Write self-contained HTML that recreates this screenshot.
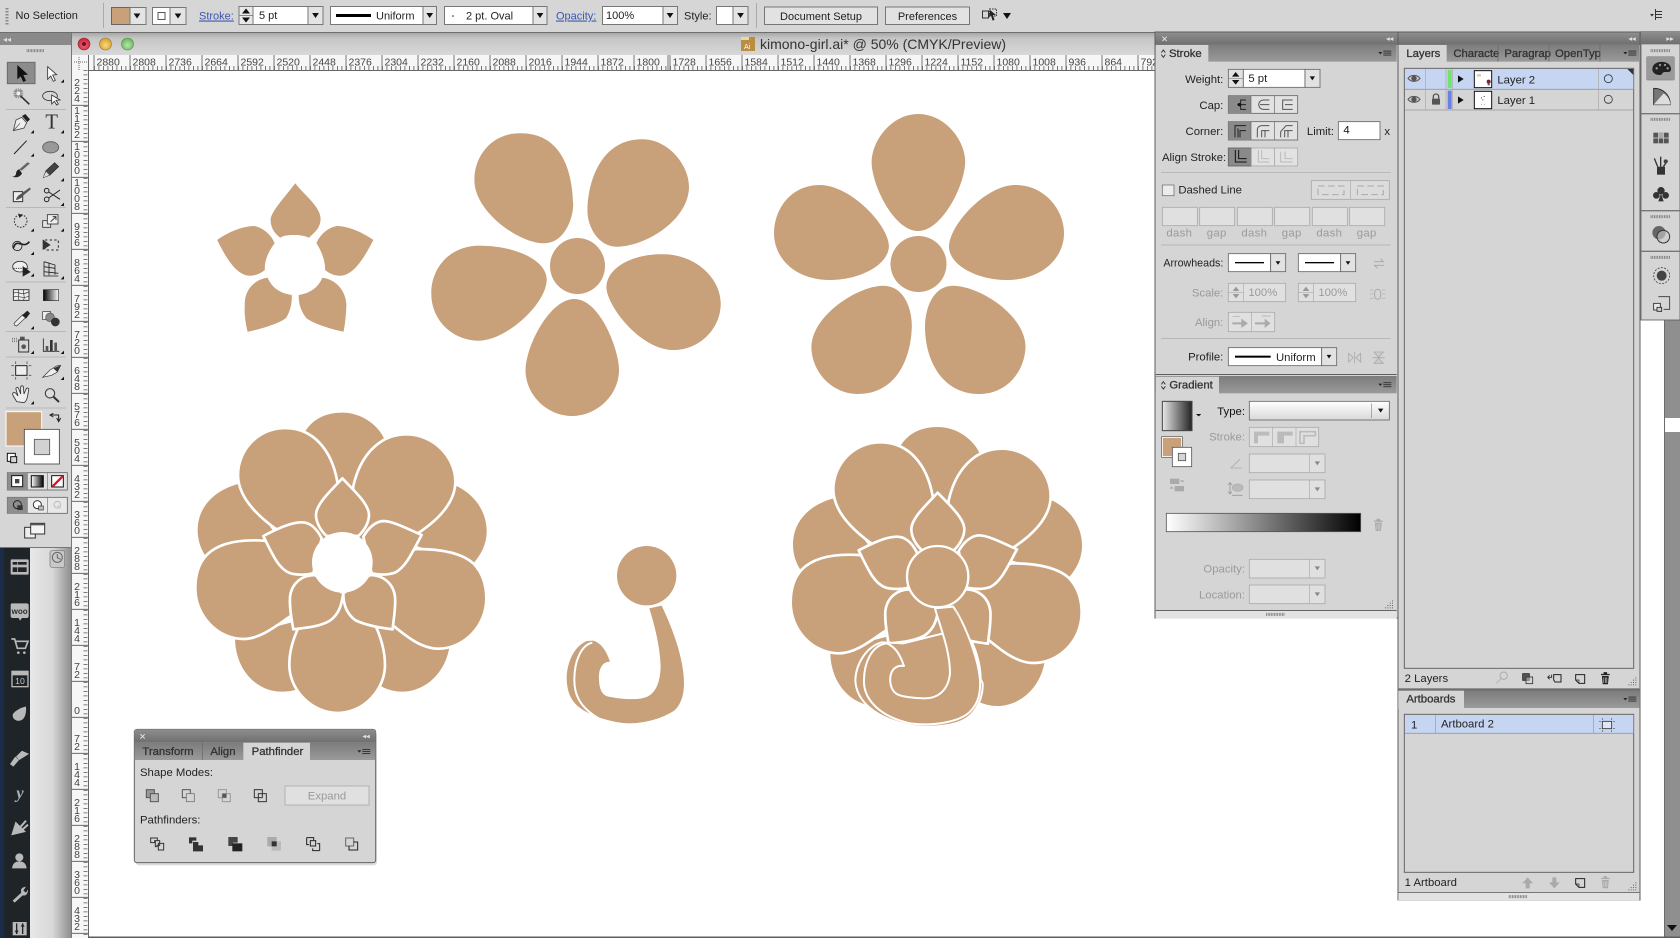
<!DOCTYPE html>
<html><head><meta charset="utf-8"><title>kimono-girl.ai</title>
<style>
html,body{margin:0;padding:0;background:#fff;width:1680px;height:938px;overflow:hidden}
svg{display:block}
text{font-family:"Liberation Sans",sans-serif;fill:#222}
.z text{font-size:34px}
.e{text-anchor:end}
.c{text-anchor:middle}
text.g{fill:#9a9a9a}
text.b{fill:#333;stroke:#333;stroke-width:.9px}
text.i{fill:#444}
.top text{font-size:11px}
text.lk{fill:#3a56b0;text-decoration:underline}
.rh text{font-size:10.5px;fill:#444}
.rv text{font-size:10.5px;fill:#444;text-anchor:middle}
</style></head><body>
<svg width="1680" height="938" viewBox="0 0 1680 938" xmlns="http://www.w3.org/2000/svg">
<defs>
<linearGradient id="tb" x1="0" y1="0" x2="0" y2="1"><stop offset="0" stop-color="#8e8e8e"/><stop offset="1" stop-color="#6e6e6e"/></linearGradient>
<linearGradient id="tr" x1="0" y1="0" x2="0" y2="1"><stop offset="0" stop-color="#7c7c7c"/><stop offset="1" stop-color="#9a9a9a"/></linearGradient>
<linearGradient id="wb" x1="0" y1="0" x2="0" y2="1"><stop offset="0" stop-color="#a8a8a8"/><stop offset=".25" stop-color="#c6c6c6"/><stop offset="1" stop-color="#d8d8d8"/></linearGradient>
<linearGradient id="gh" x1="0" y1="0" x2="1" y2="0"><stop offset="0" stop-color="#fff"/><stop offset="1" stop-color="#000"/></linearGradient>
<linearGradient id="gs" x1="0" y1="0" x2="1" y2="0"><stop offset="0" stop-color="#e8e8e8"/><stop offset="1" stop-color="#222"/></linearGradient>
<linearGradient id="gd" x1="0" y1="0" x2="1" y2="0"><stop offset="0" stop-color="#e8e8e8"/><stop offset=".55" stop-color="#d8d8d8"/><stop offset="1" stop-color="#8e8e8e"/></linearGradient>
<linearGradient id="gt" x1="0" y1="0" x2="0" y2="1"><stop offset="0" stop-color="#fff"/><stop offset="1" stop-color="#d8d8d8"/></linearGradient>
<radialGradient id="lr" cy=".6" r=".6"><stop offset="0" stop-color="#f06a7a"/><stop offset="1" stop-color="#c81c34"/></radialGradient>
<radialGradient id="ly" cy=".6" r=".6"><stop offset="0" stop-color="#f4dc80"/><stop offset="1" stop-color="#dc9a28"/></radialGradient>
<radialGradient id="lg" cy=".6" r=".6"><stop offset="0" stop-color="#b8e8a8"/><stop offset="1" stop-color="#62b458"/></radialGradient>
<path id="da" d="M-8 -6H8L0 6Z" fill="#111"/>
<path id="dg" d="M-8 -6H8L0 6Z" fill="#888"/>
<g id="m" fill="#222"><path d="M-20 -4H-8L-14 3Z"/><rect x="-5" y="-8" width="24" height="2.4"/><rect x="-5" y="-2" width="24" height="2.4"/><rect x="-5" y="4" width="24" height="2.4"/></g>
<g id="gp"><line x1="-30" x2="30" stroke="#777" stroke-width="9" stroke-dasharray="2.5 2.5"/></g>
<g id="ey"><path d="M-18 0C-10 -12 10 -12 18 0C10 12 -10 12 -18 0Z" fill="#c8c8c8" stroke="#555" stroke-width="3"/><circle r="8" fill="#555"/></g>
<g id="ud" fill="none" stroke="#222" stroke-width="2.5"><path d="M-6 -3L0 -11L6 -3M-6 3L0 11L6 3"/></g>
<g id="tr2"><path d="M-10 -8H10V-5H-10ZM-4 -12H4V-8H-4ZM-8 -3H8L6 16H-6Z"/><path d="M-3.500 0V13M0 0V13M3.500 0V13" stroke="#d5d5d5" stroke-width="1.400"/></g>
<g id="bp">
<g fill="#c8a07a">
<path d="M375 95C400 55 440 38 487 38C540 38 590 70 612 115L520 300H470Z"/>
<path d="M175 252C105 270 53 320 53 390C53 420 62 448 78 470L300 420Z"/>
<path d="M830 258C885 285 920 335 920 395C920 430 905 462 880 490L650 420Z"/>
<path d="M165 712C165 810 230 875 305 875C320 875 335 873 345 870L400 650Z"/>
<path d="M808 742C795 820 735 875 665 875C645 875 625 870 605 860L560 650Z"/>
</g>
<g fill="#c8a07a" stroke="#fff" stroke-width="8" stroke-linejoin="round">
<path d="M472 245C455 150 400 84 315 84C235 84 174 150 174 225C174 290 230 345 285 385L480 500Z"/>
<path d="M520 258C540 170 595 103 680 103C760 103 826 170 826 245C826 305 780 355 718 397L500 500Z"/>
<path d="M252 422C220 420 130 415 80 465C56 490 46 525 46 565C46 650 115 717 190 717C240 717 285 680 332 648L500 500Z"/>
<path d="M710 447C770 447 840 455 880 490C909 520 919 555 919 595C919 680 850 746 775 746C725 746 680 710 640 677L500 500Z"/>
<path d="M352 690C335 730 328 760 328 795C328 870 395 939 473 939C550 939 615 870 615 795C615 755 605 720 590 685L480 500Z"/>
<path d="M487 235C460 265 408 310 408 345C408 370 425 395 440 408H535C555 390 567 365 567 345C567 310 515 265 487 235Z"/>
<path d="M250 408C285 390 330 367 365 367C390 367 410 385 425 415L400 520C380 525 360 525 340 522C300 515 280 470 250 408Z"/>
<path d="M725 405C690 390 640 363 610 363C585 365 565 385 550 410L575 520C600 525 625 525 645 518C680 500 700 450 725 405Z"/>
<path d="M340 688C335 660 328 625 330 590C335 550 365 525 405 525L490 580C485 610 480 640 450 662C420 680 380 683 340 688Z"/>
<path d="M638 688C640 660 648 625 645 590C640 550 610 525 570 525L490 580C490 615 500 640 525 660C555 675 595 683 638 688Z"/>
</g></g>
</defs>

<rect width="1680" height="938" fill="#fff"/>

<!-- top bar -->
<rect width="1680" height="32" fill="#d6d6d6"/>
<rect y="32" width="1680" height="1" fill="#6e6e6e"/>
<g class="top">
<line x1="7" y1="8" x2="7" y2="25" stroke="#888" stroke-width="3" stroke-dasharray="1.5 1.5"/>
<text x="15.5" y="19">No Selection</text>
<rect x="103" y="3" width="1" height="25" fill="#aaa"/>
<rect x="111.5" y="7.5" width="18.5" height="17" fill="#c8a07a" stroke="#666"/>
<rect x="130" y="7.5" width="16" height="17" fill="#e4e4e4" stroke="#777"/><use href="#da" transform="translate(137 16) scale(.42)"/>
<rect x="152.5" y="7.5" width="17.5" height="17" fill="#fff" stroke="#777"/><rect x="158" y="12.5" width="7" height="7" fill="none" stroke="#555"/>
<rect x="170" y="7.5" width="16" height="17" fill="#e4e4e4" stroke="#777"/><use href="#da" transform="translate(178 16) scale(.42)"/>
<text x="199" y="19.5" class="lk">Stroke:</text>
<rect x="239" y="6.5" width="14" height="18" fill="#e8e8e8" stroke="#777"/><path d="M242 13.5h8l-4-5ZM242 17.5h8l-4 5Z" fill="#111"/><line x1="239" x2="253" y1="15.5" y2="15.5" stroke="#888"/>
<rect x="253" y="6.5" width="55" height="18" fill="#fff" stroke="#777"/><text x="259" y="19">5 pt</text>
<rect x="308" y="6.5" width="15" height="18" fill="#e4e4e4" stroke="#777"/><use href="#da" transform="translate(315.5 15.5) scale(.42)"/>
<rect x="330.5" y="6.5" width="92.5" height="18" fill="#fff" stroke="#777"/><rect x="336" y="14" width="35" height="3" fill="#000"/><text x="376" y="19.5">Uniform</text>
<rect x="423" y="6.5" width="13.5" height="18" fill="#e4e4e4" stroke="#777"/><use href="#da" transform="translate(429.7 15.5) scale(.42)"/>
<rect x="444.5" y="6.5" width="88.5" height="18" fill="#fff" stroke="#777"/><circle cx="453" cy="16" r=".8" fill="#222"/><text x="466" y="19.5">2 pt. Oval</text>
<rect x="533" y="6.5" width="14" height="18" fill="#e4e4e4" stroke="#777"/><use href="#da" transform="translate(540 15.5) scale(.42)"/>
<text x="556" y="19.5" class="lk">Opacity:</text>
<rect x="602.5" y="6.5" width="60.5" height="18" fill="#fff" stroke="#777"/><text x="606" y="19">100%</text>
<rect x="663" y="6.5" width="14.5" height="18" fill="#e4e4e4" stroke="#777"/><use href="#da" transform="translate(670 15.5) scale(.42)"/>
<text x="684" y="19.5">Style:</text>
<rect x="716.5" y="6.5" width="16.5" height="18" fill="#fff" stroke="#777"/>
<rect x="733" y="6.5" width="15" height="18" fill="#e4e4e4" stroke="#777"/><use href="#da" transform="translate(740.5 15.5) scale(.42)"/>
<rect x="756" y="3" width="1" height="25" fill="#aaa"/>
<rect x="764.5" y="7" width="113" height="17.5" fill="#e2e2e2" stroke="#777"/><text x="821" y="20" class="c">Document Setup</text>
<rect x="885.5" y="7" width="84" height="17.5" fill="#e2e2e2" stroke="#777"/><text x="927.5" y="20" class="c">Preferences</text>
<g stroke="#333" fill="none"><rect x="982.5" y="11" width="6" height="7"/><rect x="989.5" y="9" width="7" height="7" stroke-dasharray="1.5 1"/></g><path d="M990 10l6 5-3 0 1.5 5-2 .5-1.5-5-2 2Z" fill="#222"/>
<path d="M1003 13h8l-4 6Z" fill="#111"/>
<g fill="#333"><path d="M1650 14h4l-2 2.500Z"/><rect x="1656" y="11" width="6" height="1"/><rect x="1656" y="14" width="6" height="1"/><rect x="1656" y="17" width="6" height="1"/><rect x="1655" y="9" width="1" height="11"/></g>
</g>

<!-- window chrome -->
<rect x="72" y="33" width="1083" height="22" fill="url(#wb)"/>
<circle cx="84" cy="44" r="6" fill="url(#lr)" stroke="#8a3a3a" stroke-width=".6"/><circle cx="84" cy="44" r="2" fill="#6b1220"/>
<circle cx="105.500" cy="44" r="6" fill="url(#ly)" stroke="#93753a" stroke-width=".6"/>
<circle cx="127.500" cy="44" r="6" fill="url(#lg)" stroke="#578a4f" stroke-width=".6"/>
<rect x="741" y="37" width="14" height="14" fill="#b98d42"/><rect x="741" y="37" width="8" height="3" fill="#e8d8a8"/><text x="744" y="49" style="font-size:7px;fill:#fff">Ai</text>
<text x="760" y="49" style="font-size:14px;fill:#333">kimono-girl.ai* @ 50% (CMYK/Preview)</text>

<!-- rulers -->
<rect x="72" y="55" width="1083" height="15" fill="#f6f6f6"/>
<rect x="72" y="70" width="1083" height="1" fill="#666"/>
<g stroke="#555" stroke-width=".8">
<path d="M94 55V70M130 55V70M166 55V70M202 55V70M238 55V70M274 55V70M310 55V70M346 55V70M382 55V70M418 55V70M454 55V70M490 55V70M526 55V70M562 55V70M598 55V70M634 55V70M670 55V70M706 55V70M742 55V70M778 55V70M814 55V70M850 55V70M886 55V70M922 55V70M958 55V70M994 55V70M1030 55V70M1066 55V70M1102 55V70M1138 55V70M668 55V70"/>
<line x1="94" x2="1155" y1="68" y2="68" stroke-width="4" stroke-dasharray=".8 3.700"/>
</g>
<g class="rh"><text y="65.500"><tspan x="96.500">2880</tspan><tspan x="132.500">2808</tspan><tspan x="168.500">2736</tspan><tspan x="204.500">2664</tspan><tspan x="240.500">2592</tspan><tspan x="276.500">2520</tspan><tspan x="312.500">2448</tspan><tspan x="348.500">2376</tspan><tspan x="384.500">2304</tspan><tspan x="420.500">2232</tspan><tspan x="456.500">2160</tspan><tspan x="492.500">2088</tspan><tspan x="528.500">2016</tspan><tspan x="564.500">1944</tspan><tspan x="600.500">1872</tspan><tspan x="636.500">1800</tspan><tspan x="672.500">1728</tspan><tspan x="708.500">1656</tspan><tspan x="744.500">1584</tspan><tspan x="780.500">1512</tspan><tspan x="816.500">1440</tspan><tspan x="852.500">1368</tspan><tspan x="888.500">1296</tspan><tspan x="924.500">1224</tspan><tspan x="960.500">1152</tspan><tspan x="996.500">1080</tspan><tspan x="1032.500">1008</tspan><tspan x="1068.500">936</tspan><tspan x="1104.500">864</tspan><tspan x="1140.500">792</tspan></text></g>
<rect x="72" y="70" width="16" height="868" fill="#f6f6f6"/>
<rect x="88" y="55" width="1" height="883" fill="#666"/>
<rect x="71" y="33" width="1" height="905" fill="#777"/>
<path d="M74 62H88M79 57V70" stroke="#666" stroke-dasharray="1 1" fill="none"/>
<g stroke="#555" stroke-width=".8">
<path d="M72 105.300H88M72 141.300H88M72 177.300H88M72 213.300H88M72 249.300H88M72 285.300H88M72 321.300H88M72 357.300H88M72 393.300H88M72 429.300H88M72 465.300H88M72 501.300H88M72 537.300H88M72 573.300H88M72 609.300H88M72 645.300H88M72 681.300H88M72 717.300H88M72 753.300H88M72 789.300H88M72 825.300H88M72 861.300H88M72 897.300H88M72 933.300H88"/>
<line x1="85.500" x2="85.500" y1="70" y2="938" stroke-width="4" stroke-dasharray=".8 3.700"/>
</g>
<g class="rv">
<text x="77 77 77" y="85.800 93.800 101.800">224</text>
<text x="77 77 77 77" y="113.800 121.800 129.800 137.800">1152</text>
<text x="77 77 77 77" y="149.800 157.800 165.800 173.800">1080</text>
<text x="77 77 77 77" y="185.800 193.800 201.800 209.800">1008</text>
<text x="77 77 77" y="229.800 237.800 245.800">936</text>
<text x="77 77 77" y="265.800 273.800 281.800">864</text>
<text x="77 77 77" y="301.800 309.800 317.800">792</text>
<text x="77 77 77" y="337.800 345.800 353.800">720</text>
<text x="77 77 77" y="373.800 381.800 389.800">648</text>
<text x="77 77 77" y="409.800 417.800 425.800">576</text>
<text x="77 77 77" y="445.800 453.800 461.800">504</text>
<text x="77 77 77" y="481.800 489.800 497.800">432</text>
<text x="77 77 77" y="517.800 525.800 533.800">360</text>
<text x="77 77 77" y="553.800 561.800 569.800">288</text>
<text x="77 77 77" y="589.800 597.800 605.800">216</text>
<text x="77 77 77" y="625.800 633.800 641.800">144</text>
<text x="77 77" y="669.800 677.800">72</text>
<text x="77" y="713.800">0</text>
<text x="77 77" y="741.800 749.800">72</text>
<text x="77 77 77" y="769.800 777.800 785.800">144</text>
<text x="77 77 77" y="805.800 813.800 821.800">216</text>
<text x="77 77 77" y="841.800 849.800 857.800">288</text>
<text x="77 77 77" y="877.800 885.800 893.800">360</text>
<text x="77 77 77" y="913.800 921.800 929.800">432</text>
</g>

<!-- art -->
<g fill="#c8a07a">
<path d="M295.300 183.300C285 197 270.600 212 270.600 220C270.600 228 275 234 280.400 237.700C284 235 290 235 295 235C300 235 305 236 309 237.700C315 232 320.600 228 320.600 218.300C320 206 303 194 295.300 183.300Z"/>
<path d="M217.200 240C228 232 243 226 254.500 226C264 228 272 236 274.600 243.300C268 252 264 262 264.900 270C260 274 255 275.700 250.500 275.700C238 276 228 262 217.200 240Z"/>
<path d="M373.400 240C362 232 348 226 336.600 226C327 228 319 236 316.500 243.300C322 252 325.500 262 325.100 270C330 274 335 275.700 339.500 275.700C352 276 362 262 373.400 240Z"/>
<path d="M267.700 277.700C255 279 244 290 244.800 305C244 315 246 325 247.600 331.700C262 329 280 323 286.100 318C291 310 292 302 291.800 295C280 293 272 288 267.700 277.700Z"/>
<path d="M322.300 277.700C335 279 346 290 346.400 305C346 315 345 325 343.500 331.700C330 329 312 323 306.200 318C300 310 298.500 302 298.700 295C310 293 318 288 322.300 277.700Z"/>
<ellipse cx="577.500" cy="266" rx="27.500" ry="28"/>
<path d="M520.300 133.300C490 133 474 158 474.400 180C474 212 520 244 544.400 243.300C566 243 574 215 573.100 203C572 165 558 133 520.300 133.300Z"/>
<path d="M642 139.300C668 139 689 165 689 186.700C689 220 645 247 616.200 246.700C597 246 587 225 587.500 210C588 178 603 139 642 139.300Z"/>
<path d="M481.300 245.700C515 246 547 260 546.700 280C546 305 505 341 478.400 340.700C450 340 431 318 431.300 293.300C431 270 448 245 481.300 245.700Z"/>
<path d="M662 254.300C697 254 721 280 720.700 303.300C721 328 700 350 673.600 350C640 350 606 305 606.400 286.700C607 268 632 254 662 254.300Z"/>
<path d="M574.300 299C600 299 619 350 619 370C619 395 597 416 572 416C547 416 525.500 395 525.500 370C526 345 550 299 574.300 299Z"/>
<ellipse cx="918.500" cy="264" rx="28" ry="28"/>
<path d="M918 114C945 114 965 140 965.200 161.700C965 185 942 231 918 231C894 231 871.600 185 871.600 161.700C872 140 892 114 918 114Z"/>
<path d="M820 185C850 185 889 225 888.900 246.700C888 265 860 280 829.700 280C795 280 774 258 774 233.300C774 210 790 185 820 185Z"/>
<path d="M1015 185C1045 185 1064 210 1064 233.300C1064 258 1042 280 1006.500 280C977 280 949 265 949 246.700C949 225 986 185 1015 185Z"/>
<path d="M883 285.700C905 286 912 310 911.800 326.700C911 360 895 394 858.400 394C830 394 811.400 370 811.400 346.700C812 315 858 286 883 285.700Z"/>
<path d="M953 285.700C980 286 1025 315 1025.500 346.700C1025 370 1008 394 979 394C942 394 925 360 925 326.700C925 310 932 286 953 285.700Z"/>
</g>
<g transform="translate(180 400) scale(.33333)">
<use href="#bp"/>
<circle cx="487" cy="487" r="91" fill="#fff"/>
<circle cx="1400" cy="527" r="89" fill="#c8a07a"/>
<path d="M1408 625L1445 617C1480 690 1512 780 1512 850C1512 880 1505 910 1485 930C1450 955 1395 970 1345 970C1290 968 1225 945 1195 920C1165 895 1160 860 1160 830C1162 790 1180 740 1220 723L1240 722C1265 730 1280 755 1290 785C1265 785 1255 810 1257 840C1258 865 1265 885 1285 890C1320 897 1360 900 1385 895C1420 890 1440 860 1442 800C1440 740 1425 680 1408 625Z" fill="#c8a07a"/>
<path d="M1237 728C1205 735 1183 780 1183 840C1183 880 1195 920 1260 958" fill="none" stroke="#fff" stroke-width="6"/>
</g>
<g transform="translate(770 410) scale(.33333)">
<use href="#bp" transform="translate(16 13)"/>
<circle cx="503" cy="500" r="92" fill="#c8a07a" stroke="#fff" stroke-width="7"/>
<path d="M335 697C290 710 258 760 256 810C258 870 310 925 430 948C500 955 560 945 590 925C620 905 640 860 638 820L560 660L400 700Z" fill="#c8a07a" stroke="#fff" stroke-width="6"/>
<path d="M350 700C305 705 280 760 282 820C285 870 330 920 420 940C490 950 570 935 600 905C625 880 632 850 630 810C625 750 590 650 550 590L495 595C510 650 540 720 540 790C535 840 505 865 465 865C430 865 395 860 380 852C362 840 358 815 362 795C368 772 385 765 402 768C392 740 380 712 350 700Z" fill="#c8a07a" stroke="#fff" stroke-width="6" stroke-linejoin="round"/>
<path d="M556 600C590 670 618 760 616 830" fill="none" stroke="#c8a07a" stroke-width="1"/>
</g>

<!-- desktop strip + dock -->
<rect x="30" y="548" width="41" height="390" fill="url(#gd)"/>
<rect x="0" y="548" width="30" height="390" fill="#1f2429"/>
<rect x="0" y="548" width="4" height="390" fill="#1a2c47"/>
<g transform="translate(0 530) scale(.33333)" class="z">
<rect x="150" y="62" width="44" height="50" rx="6" fill="#c8c8c8" stroke="#777" stroke-width="2"/><circle cx="172" cy="82" r="15" fill="none" stroke="#666" stroke-width="3"/><path d="M172 72V83L182 88" stroke="#666" stroke-width="3" fill="none"/>
<g fill="#b9b9b9">
<rect x="32" y="88" width="54" height="46" rx="3"/>
<rect x="38" y="96" width="14" height="8" fill="#1f2429"/><rect x="54" y="96" width="26" height="8" fill="#1f2429"/><rect x="38" y="112" width="14" height="14" fill="#1f2429"/><rect x="54" y="112" width="26" height="14" fill="#1f2429"/>
<path d="M36 220H80Q86 220 86 226V258Q86 264 80 264H66L60 272L56 264H38Q32 264 32 258V226Q32 220 36 220Z"/>
</g>
<text x="59" y="252" class="c" style="font-size:24px;font-weight:bold;fill:#2a2f35">woo</text>
<path d="M34 327H44L52 355H76L84 334H48" fill="none" stroke="#b9b9b9" stroke-width="5"/><circle cx="55" cy="368" r="4" fill="#b9b9b9"/><circle cx="73" cy="368" r="4" fill="#b9b9b9"/>
<rect x="34" y="422" width="52" height="50" fill="#b9b9b9"/><rect x="38" y="436" width="44" height="32" fill="#1f2429"/><text x="60" y="462" class="c" style="font-size:26px;fill:#c8c8c8">10</text>
<path d="M78 530C60 532 38 548 38 556C38 568 50 574 60 572C72 570 80 555 78 530Z" fill="#b9b9b9"/>
<path d="M84 672L58 688L50 680L66 664ZM55 690L40 708L32 702L46 682Z" fill="#b9b9b9" stroke="#b9b9b9" stroke-width="3"/>
<text x="60" y="805" class="c" style="font-size:50px;font-weight:bold;font-style:italic;fill:#a8b0bd;font-family:'Liberation Serif',serif">y</text>
<path d="M38 912L48 880L72 904ZM62 890L78 872M68 898L84 884" stroke="#b9b9b9" stroke-width="6" fill="#b9b9b9"/>
<circle cx="58" cy="982" r="12" fill="#b9b9b9"/><path d="M36 1015C38 998 48 994 58 994C68 994 78 998 80 1015Z" fill="#b9b9b9"/>
<path d="M38 1112L64 1088C60 1078 66 1072 78 1070L70 1082L78 1088L84 1078C84 1094 76 1098 68 1096L44 1118Z" fill="#b9b9b9"/>
<rect x="38" y="1176" width="42" height="40" fill="#b9b9b9"/><path d="M50 1180V1212M68 1180V1212" stroke="#1f2429" stroke-width="4"/><path d="M44 1202H56L50 1212ZM62 1190H74L68 1180Z" fill="#1f2429"/>
</g>

<!-- tools panel -->
<rect x="0" y="33" width="71" height="515" fill="#d6d6d6"/>
<rect x="0" y="33" width="71" height="12" fill="#8a8a8a"/>
<rect x="0" y="547" width="71" height="1" fill="#777"/>
<text x="3" y="42" style="font-size:8px;fill:#ddd">◂◂</text>
<g transform="translate(0 40) scale(.33333)">
<use href="#gp" transform="translate(107 32) scale(.9 1)"/>
<rect x="22" y="67" width="83" height="64" fill="#8c8c8c" stroke="#6a6a6a" stroke-width="3"/>
<path d="M52 75V118L62 109L70 126L78 122L70 105L84 104Z" fill="#111"/>
<path d="M143 80V118L152 108L160 124L166 121L158 105L170 104Z" fill="#fff" stroke="#333" stroke-width="2.500"/><path d="M192 118V128H182Z" fill="#111"/>
<g stroke="#8a8a8a" stroke-width="3"><path d="M40 160H70M55 145V175M44 149L66 171M66 149L44 171M48 146L62 174M62 146L48 174M41 153L69 167M41 167L69 153"/></g><circle cx="55" cy="160" r="6" fill="#f0f0f0"/><line x1="62" y1="168" x2="88" y2="193" stroke="#333" stroke-width="5"/>
<ellipse cx="150" cy="168" rx="22" ry="14" fill="none" stroke="#333" stroke-width="2.500"/><path d="M155 165V192L163 184L170 195L175 192L168 181L180 180Z" fill="#fff" stroke="#333" stroke-width="2.500"/>
<g fill="#aaa"><rect x="18" y="208" width="180" height="2"/><rect x="18" y="502" width="180" height="2"/><rect x="18" y="725" width="180" height="2"/><rect x="18" y="873" width="180" height="2"/><rect x="18" y="950" width="180" height="2"/><rect x="18" y="1103" width="180" height="2"/></g>
<path d="M40 272L48 240L65 232L80 248L72 264Z" fill="#eee" stroke="#444" stroke-width="2.500"/><path d="M66 228L76 222L90 238L82 246Z" fill="#222"/><path d="M42 270L60 250" stroke="#444" stroke-width="2"/>
<path d="M102 270V280H92Z" fill="#111"/>
<text x="155" y="265" class="c" style="font-size:62px;font-family:'Liberation Serif',serif;fill:#333">T</text><path d="M192 270V280H182Z" fill="#111"/>
<line x1="42" y1="342" x2="80" y2="302" stroke="#222" stroke-width="3"/><path d="M102 340V350H92Z" fill="#111"/>
<ellipse cx="152" cy="322" rx="24" ry="17" fill="#999" stroke="#555" stroke-width="2.500"/><path d="M192 340V350H182Z" fill="#111"/>
<path d="M90 370L65 392L58 388L82 367Z" fill="#666"/><path d="M58 388C52 388 48 395 48 402C46 408 42 410 36 410C46 414 60 412 66 400Z" fill="#222"/>
<path d="M130 413L138 392L164 368L176 380L150 405Z" fill="#444" stroke="#222" stroke-width="2"/><path d="M130 413L138 395L148 405Z" fill="#ddd"/><path d="M192 414V424H182Z" fill="#111"/>
<path d="M40 455H68V485H40Z" fill="#eee" stroke="#333" stroke-width="3"/><path d="M90 442L62 462C55 465 48 474 48 480C58 478 68 472 70 466L92 448Z" fill="#555"/>
<g fill="none" stroke="#222" stroke-width="3"><circle cx="140" cy="452" r="7"/><circle cx="140" cy="478" r="7"/><path d="M146 456L180 478M146 474L180 450"/></g><path d="M192 488V498H182Z" fill="#111"/>
<circle cx="62" cy="543" r="19" fill="none" stroke="#333" stroke-width="3" stroke-dasharray="5 4"/><path d="M55 520L68 526L58 534Z" fill="#222"/><path d="M102 565V575H92Z" fill="#111"/>
<rect x="128" y="542" width="24" height="20" fill="#e4e4e4" stroke="#333" stroke-width="2.500"/><rect x="142" y="524" width="32" height="28" fill="#eee" stroke="#333" stroke-width="2.500"/><path d="M152 545L168 530M158 530H168V540" fill="none" stroke="#222" stroke-width="2.500"/><path d="M192 565V575H182Z" fill="#111"/>
<path d="M40 625C50 590 70 630 88 605" fill="none" stroke="#222" stroke-width="5"/><circle cx="52" cy="618" r="14" fill="none" stroke="#222" stroke-width="2.500"/><path d="M102 635V645H92Z" fill="#111"/>
<rect x="135" y="600" width="40" height="30" fill="none" stroke="#222" stroke-width="3" stroke-dasharray="7 7"/><path d="M128 598V630L152 615Z" fill="#333"/>
<ellipse cx="60" cy="680" rx="22" ry="16" fill="#eee" stroke="#333" stroke-width="2.500"/><path d="M40 685H85" stroke="#333" stroke-width="2.500" stroke-dasharray="4 3"/><path d="M68 678V710L92 696Z" fill="#222"/><path d="M102 700V710H92Z" fill="#111"/>
<path d="M132 665V708H175M132 665L165 675V704M147 668V706M132 680L165 685M132 695L175 700" fill="none" stroke="#222" stroke-width="2.500"/><path d="M192 708V718H182Z" fill="#111"/>
<rect x="40" y="749" width="47" height="32" fill="#eee" stroke="#222" stroke-width="2.500"/><path d="M40 760C52 750 60 770 87 755M40 772C55 762 65 780 87 768M55 749C60 760 50 770 58 781M72 749C66 760 78 770 70 781" fill="none" stroke="#333" stroke-width="2"/>
<rect x="130" y="749" width="46" height="33" fill="url(#gh)" transform="rotate(180 153 765.500)" stroke="#333" stroke-width="2"/>
<path d="M44 856L42 850L68 824L78 832L50 858Z" fill="#eee" stroke="#333" stroke-width="2"/><path d="M66 826L82 812L90 820L78 836Z" fill="#222"/><path d="M102 858V868H92Z" fill="#111"/>
<rect x="128" y="815" width="24" height="24" fill="#eee" stroke="#333" stroke-width="2"/><circle cx="150" cy="832" r="13" fill="#888" stroke="#555" stroke-width="2"/><circle cx="166" cy="846" r="13" fill="#333"/>
<path d="M36 895h2M42 895h2M48 895h2M36 900h2M42 900h2M48 900h2M36 905h2M42 905h2M48 905h2" stroke="#444" stroke-width="3"/><rect x="60" y="890" width="14" height="10" fill="#555"/><rect x="56" y="900" width="30" height="36" fill="#d6d6d6" stroke="#333" stroke-width="3"/><circle cx="71" cy="920" r="7" fill="#555"/><path d="M102 932V942H92Z" fill="#111"/>
<path d="M130 895V934H178" fill="none" stroke="#222" stroke-width="2.500"/><rect x="137" y="918" width="8" height="16" fill="#555"/><rect x="150" y="900" width="8" height="34" fill="#333"/><rect x="163" y="908" width="8" height="26" fill="#555"/><path d="M192 932V942H182Z" fill="#111"/>
<rect x="47" y="977" width="34" height="29" fill="#eee" stroke="#222" stroke-width="3"/><path d="M34 977H42M34 1006H42M86 977H94M86 1006H94M47 964V972M81 964V972M47 1011V1019M81 1011V1019" stroke="#555" stroke-width="2.500"/>
<path d="M128 1012L150 990L170 978L182 976L172 996L155 1006Z" fill="#eee" stroke="#333" stroke-width="2"/><path d="M160 985L182 976L172 996Z" fill="#333"/><path d="M192 1010V1020H182Z" fill="#111"/>
<path d="M50 1085C42 1070 34 1062 40 1058C46 1056 50 1062 54 1068L48 1048C46 1042 54 1040 56 1046L62 1062L62 1042C62 1036 70 1036 70 1042L72 1062L78 1048C80 1042 88 1044 86 1050L82 1072C80 1080 78 1085 72 1088Z" fill="#eee" stroke="#333" stroke-width="2.500"/><path d="M102 1083V1093H92Z" fill="#111"/>
<circle cx="150" cy="1060" r="14" fill="#ddd" stroke="#444" stroke-width="3.500"/><line x1="160" y1="1070" x2="177" y2="1086" stroke="#333" stroke-width="6"/>
<rect x="18" y="1115" width="107" height="103" fill="#c8a07a" stroke="#fff" stroke-width="3"/>
<rect x="73" y="1168" width="105" height="104" fill="#fff" stroke="#444" stroke-width="2.500"/>
<rect x="103" y="1198" width="46" height="46" fill="#d2d2d2" stroke="#555" stroke-width="2.500"/>
<path d="M152 1125H176V1142M170 1134L176 1145L182 1134M160 1120L150 1125L160 1131" fill="none" stroke="#222" stroke-width="3"/>
<rect x="22" y="1240" width="24" height="24" fill="#fff" stroke="#111" stroke-width="3"/><rect x="32" y="1250" width="18" height="18" fill="#d6d6d6" stroke="#111" stroke-width="3"/>
<rect x="22" y="1298" width="180" height="52" fill="#e0e0e0" stroke="#666" stroke-width="2.500"/>
<rect x="22" y="1298" width="60" height="52" fill="#8e8e8e"/>
<rect x="35" y="1307" width="33" height="33" fill="#fff" stroke="#111" stroke-width="3"/><rect x="45" y="1317" width="13" height="13" fill="#444"/>
<rect x="94" y="1307" width="36" height="34" fill="url(#gh)" stroke="#111" stroke-width="3"/>
<rect x="155" y="1307" width="35" height="34" fill="#fff" stroke="#111" stroke-width="3"/><path d="M157 1340L188 1309" stroke="#e01030" stroke-width="7"/>
<path d="M82 1298V1350M142 1298V1350" stroke="#777" stroke-width="2"/>
<rect x="22" y="1372" width="180" height="48" fill="#e8e8e8" stroke="#666" stroke-width="2.500"/>
<rect x="22" y="1372" width="60" height="48" fill="#8e8e8e"/>
<circle cx="52" cy="1394" r="12" fill="none" stroke="#222" stroke-width="3"/><rect x="52" y="1396" width="16" height="14" fill="#333"/>
<circle cx="112" cy="1394" r="12" fill="#fff" stroke="#333" stroke-width="3"/><rect x="116" y="1398" width="14" height="12" fill="#bbb" stroke="#333" stroke-width="2"/>
<circle cx="172" cy="1394" r="10" fill="none" stroke="#bbb" stroke-width="3"/><rect x="172" y="1396" width="10" height="10" fill="#ccc"/>
<path d="M82 1372V1420M142 1372V1420" stroke="#777" stroke-width="2"/>
<rect x="74" y="1462" width="32" height="32" fill="#eee" stroke="#333" stroke-width="3"/><rect x="92" y="1450" width="42" height="32" fill="#f4f4f4" stroke="#333" stroke-width="3"/><rect x="92" y="1450" width="42" height="6" fill="#555"/>
</g>

<!-- scrollbar -->
<rect x="1664" y="300" width="16" height="637" fill="#8f8f8f"/>
<rect x="1664" y="418" width="16" height="14" fill="#fff"/>
<rect x="1664" y="300" width="1" height="637" fill="#6b6b6b"/>
<path d="M1667 925h10l-5 6Z" fill="#111"/>
<rect x="88" y="936.500" width="1592" height="1.500" fill="#5e5e5e"/>

<!-- stroke + gradient panels -->
<rect x="1155" y="32" width="243" height="586" fill="#d5d5d5" stroke="#5e5e5e"/>
<rect x="1155.500" y="32.500" width="242" height="12.500" fill="url(#tb)"/>
<g transform="translate(1150 30) scale(.33333)" class="z">
<text x="33" y="36" style="font-size:26px;fill:#e8e8e8">✕</text><text x="708" y="33" style="font-size:22px;fill:#e0e0e0">◂◂</text>
<rect x="17" y="43" width="723" height="52" fill="url(#tr)"/>
<rect x="17" y="45" width="158" height="53" fill="#d5d5d5"/>
<use href="#ud" transform="translate(40 71)"/><text x="57" y="81" class="b">Stroke</text>
<use href="#m" transform="translate(705 70)"/>

<text x="220" y="159" class="e">Weight:</text>
<rect x="235" y="118" width="45" height="54" fill="#e2e2e2" stroke="#666" stroke-width="2.500"/><path d="M246 140H268L257 126ZM246 150H268L257 164Z" fill="#111"/><line x1="235" x2="280" y1="145" y2="145" stroke="#888" stroke-width="2"/>
<rect x="280" y="118" width="185" height="54" fill="#fff" stroke="#666" stroke-width="2.500"/><text x="295" y="156">5 pt</text>
<rect x="465" y="118" width="45" height="54" fill="#e2e2e2" stroke="#666" stroke-width="2.500"/><use href="#da" transform="translate(487 145)"/>

<text x="220" y="237" class="e">Cap:</text>
<rect x="235" y="197" width="208" height="53" fill="#e2e2e2" stroke="#666" stroke-width="2.500"/><rect x="235" y="197" width="68" height="53" fill="#8a8a8a"/><path d="M303 197V250M373 197V250" stroke="#666" stroke-width="2"/>
<path d="M288 210H272V238H288M262 224H288" fill="none" stroke="#222" stroke-width="3"/><circle cx="268" cy="224" r="5" fill="#111"/>
<path d="M358 210H340A14 14 0 0 0 340 238H358M330 224H358" fill="none" stroke="#555" stroke-width="3"/>
<path d="M428 210H398V238H428M405 224H428" fill="none" stroke="#555" stroke-width="3"/>

<text x="220" y="315" class="e">Corner:</text>
<rect x="235" y="275" width="208" height="55" fill="#e2e2e2" stroke="#666" stroke-width="2.500"/><rect x="235" y="275" width="68" height="55" fill="#8a8a8a"/><path d="M303 275V330M373 275V330" stroke="#666" stroke-width="2"/>
<path d="M255 322V287H288M270 322V302H288M264 295V322" fill="none" stroke="#222" stroke-width="3"/>
<path d="M322 322V300Q322 287 338 287H358M335 322V302H358M345 300V322" fill="none" stroke="#555" stroke-width="3"/>
<path d="M392 322V305L408 287H428M404 322V302H428M414 300V322" fill="none" stroke="#555" stroke-width="3"/>
<text x="552" y="315" class="e">Limit:</text>
<rect x="565" y="275" width="125" height="54" fill="#fff" stroke="#666" stroke-width="2.500"/><text x="580" y="310" style="fill:#111">4</text>
<text x="703" y="315">x</text>

<text x="36" y="393">Align Stroke:</text>
<rect x="235" y="354" width="208" height="54" fill="#e2e2e2" stroke="#aaa" stroke-width="2.500"/><rect x="235" y="354" width="68" height="54" fill="#8a8a8a" stroke="#666" stroke-width="2.500"/><path d="M303 354V408M373 354V408" stroke="#999" stroke-width="2"/>
<path d="M256 360V396H290M266 360V386H290" fill="none" stroke="#111" stroke-width="3"/>
<path d="M325 360V396H358M335 360V386H358" fill="none" stroke="#bbb" stroke-width="3"/>
<path d="M392 365V396H428M405 365V386H428" fill="none" stroke="#bbb" stroke-width="3"/>

<rect x="33" y="427" width="689" height="2" fill="#aaa"/>
<rect x="37" y="465" width="35" height="32" fill="#ececec" stroke="#777" stroke-width="2.500"/>
<text x="85" y="491">Dashed Line</text>
<rect x="484" y="452" width="234" height="56" fill="#dcdcdc" stroke="#aaa" stroke-width="2.500"/><line x1="602" x2="602" y1="452" y2="508" stroke="#aaa" stroke-width="2"/>
<rect x="504" y="468" width="78" height="26" fill="none" stroke="#aaa" stroke-width="3" stroke-dasharray="20 10"/>
<rect x="622" y="468" width="78" height="26" fill="none" stroke="#aaa" stroke-width="3" stroke-dasharray="20 10"/>

<g fill="#e0e0e0" stroke="#aaa" stroke-width="2.500"><rect x="37" y="532" width="105" height="55"/><rect x="149" y="532" width="105" height="55"/><rect x="262" y="532" width="105" height="55"/><rect x="374" y="532" width="105" height="55"/><rect x="487" y="532" width="105" height="55"/><rect x="599" y="532" width="105" height="55"/></g>
<g style="letter-spacing:1px"><text x="88" y="620" class="c g">dash</text><text x="200" y="620" class="c g">gap</text><text x="313" y="620" class="c g">dash</text><text x="425" y="620" class="c g">gap</text><text x="538" y="620" class="c g">dash</text><text x="650" y="620" class="c g">gap</text></g>
<rect x="33" y="644" width="689" height="2" fill="#aaa"/>

<text x="40" y="710" textLength="180" lengthAdjust="spacingAndGlyphs">Arrowheads:</text>
<rect x="235" y="671" width="127" height="54" fill="#fff" stroke="#666" stroke-width="2.500"/><rect x="255" y="696" width="87" height="4" fill="#000"/><rect x="362" y="671" width="45" height="54" fill="#e2e2e2" stroke="#666" stroke-width="2.500"/><use href="#da" transform="translate(384 699) scale(.9)"/>
<rect x="445" y="671" width="127" height="54" fill="#fff" stroke="#666" stroke-width="2.500"/><rect x="465" y="696" width="87" height="4" fill="#000"/><rect x="572" y="671" width="45" height="54" fill="#e2e2e2" stroke="#666" stroke-width="2.500"/><use href="#da" transform="translate(594 699) scale(.9)"/>
<path d="M672 695H700L692 686M702 706H674L682 715" fill="none" stroke="#aaa" stroke-width="3"/>

<text x="220" y="800" class="e g">Scale:</text>
<rect x="235" y="760" width="172" height="55" fill="#e0e0e0" stroke="#aaa" stroke-width="2.500"/><rect x="445" y="760" width="172" height="55" fill="#e0e0e0" stroke="#aaa" stroke-width="2.500"/>
<path d="M280 760V815M490 760V815M235 787H280M445 787H490" stroke="#aaa" stroke-width="2"/>
<path d="M248 783H268L258 770ZM248 792H268L258 805ZM458 783H478L468 770ZM458 792H478L468 805Z" fill="#999"/>
<text x="295" y="798" class="g">100%</text><text x="505" y="798" class="g">100%</text>
<rect x="674" y="778" width="18" height="30" rx="9" fill="none" stroke="#aaa" stroke-width="3"/><path d="M660 780H670M660 805H670M696 780H706M696 805H706M660 792H670M696 792H706" stroke="#bbb" stroke-width="3"/>

<text x="220" y="888" class="e g">Align:</text>
<rect x="235" y="847" width="139" height="58" fill="#e0e0e0" stroke="#aaa" stroke-width="2.500"/><line x1="305" x2="305" y1="847" y2="905" stroke="#aaa" stroke-width="2"/>
<path d="M248 878H275V868L292 880L275 892V882H248ZM248 860H270M316 878H345V868L360 880L345 892V882H316ZM335 858H362" fill="#aaa" stroke="#aaa" stroke-width="2"/>
<rect x="33" y="924" width="689" height="2" fill="#aaa"/>

<text x="220" y="992" class="e">Profile:</text>
<rect x="235" y="953" width="280" height="54" fill="#fff" stroke="#666" stroke-width="2.500"/><rect x="255" y="977" width="107" height="6" fill="#000"/><text x="378" y="993">Uniform</text>
<rect x="515" y="953" width="45" height="54" fill="#e2e2e2" stroke="#666" stroke-width="2.500"/><use href="#da" transform="translate(537 980) scale(.9)"/>
<path d="M596 970L610 983L596 996ZM632 970L618 983L632 996ZM614 965V1000" fill="none" stroke="#aaa" stroke-width="2.500"/>
<path d="M672 966H700L686 982ZM672 1000H700L686 984ZM668 983H704" fill="#ccc" stroke="#aaa" stroke-width="2.500"/>
</g>
<g transform="translate(1150 370) scale(.33333)" class="z">
<rect x="17" y="12" width="723" height="3" fill="#5e5e5e"/>
<rect x="17" y="18" width="723" height="52" fill="url(#tr)"/>
<rect x="17" y="20" width="190" height="53" fill="#d5d5d5"/>
<use href="#ud" transform="translate(40 46)"/><text x="58" y="56" class="b">Gradient</text>
<use href="#m" transform="translate(705 45)"/>
<rect x="37" y="94" width="89" height="88" fill="url(#gs)" stroke="#444" stroke-width="3"/>
<path d="M138 132H154L146 139Z" fill="#111"/>
<text x="285" y="135" class="e" style="fill:#111">Type:</text>
<rect x="298" y="94" width="420" height="56" fill="url(#gt)" stroke="#666" stroke-width="2.500"/><line x1="665" x2="665" y1="100" y2="144" stroke="#888" stroke-width="2"/><use href="#da" transform="translate(692 122)"/>
<text x="285" y="212" class="e g">Stroke:</text>
<rect x="298" y="172" width="208" height="58" fill="#e0e0e0" stroke="#aaa" stroke-width="2.500"/><path d="M368 172V230M438 172V230" stroke="#aaa" stroke-width="2"/>
<path d="M312 220V185H358V197H324V220Z" fill="#bbb"/><path d="M382 220V185H428V197H402V220Z" fill="#bbb"/><path d="M450 220V185H496V197H462V220Z" fill="none" stroke="#bbb" stroke-width="5"/>
<rect x="37" y="202" width="58" height="58" fill="#c8a07a" stroke="#fff" stroke-width="3"/><rect x="35" y="200" width="62" height="62" fill="none" stroke="#555" stroke-width="2"/>
<rect x="67" y="232" width="58" height="58" fill="#fff" stroke="#555" stroke-width="2.500"/><rect x="85" y="250" width="22" height="22" fill="#d5d5d5" stroke="#555" stroke-width="2.500"/>
<path d="M242 294H276M242 294L270 268" fill="none" stroke="#aaa" stroke-width="2.500"/>
<rect x="298" y="252" width="227" height="56" fill="#e0e0e0" stroke="#aaa" stroke-width="2.500"/><line x1="478" x2="478" y1="252" y2="308" stroke="#aaa" stroke-width="2"/><use href="#dg" transform="translate(502 280)"/>
<ellipse cx="263" cy="353" rx="16" ry="11" fill="#bbb" stroke="#aaa" stroke-width="2"/><path d="M240 340V370M234 345L240 338L246 345M234 365L240 372L246 365M246 376H278" fill="none" stroke="#999" stroke-width="2.500"/>
<rect x="298" y="330" width="227" height="56" fill="#e0e0e0" stroke="#aaa" stroke-width="2.500"/><line x1="478" x2="478" y1="330" y2="386" stroke="#aaa" stroke-width="2"/><use href="#dg" transform="translate(502 358)"/>
<rect x="60" y="326" width="28" height="16" fill="#aaa"/><rect x="74" y="348" width="28" height="16" fill="#aaa"/><path d="M90 331H104L97 338ZM58 356H72L65 349Z" fill="#aaa"/>
<rect x="49" y="430" width="583" height="55" fill="url(#gh)" stroke="#555" stroke-width="2.500"/>
<use href="#tr2" transform="translate(685 462) scale(1.300)" fill="#aaa"/>
<text x="285" y="608" class="e g">Opacity:</text>
<rect x="298" y="568" width="227" height="56" fill="#e0e0e0" stroke="#aaa" stroke-width="2.500"/><line x1="478" x2="478" y1="568" y2="624" stroke="#aaa" stroke-width="2"/><use href="#dg" transform="translate(502 595)"/>
<text x="285" y="686" class="e g">Location:</text>
<rect x="298" y="645" width="227" height="56" fill="#e0e0e0" stroke="#aaa" stroke-width="2.500"/><line x1="478" x2="478" y1="645" y2="701" stroke="#aaa" stroke-width="2"/><use href="#dg" transform="translate(502 673)"/>
<path d="M705 712h3v3h-3zM712 712h3v3h-3zM719 712h3v3h-3zM726 712h3v3h-3zM712 705h3v3h-3zM719 705h3v3h-3zM726 705h3v3h-3zM719 698h3v3h-3zM726 698h3v3h-3zM726 691h3v3h-3z" fill="#666"/>
<rect x="17" y="720" width="723" height="3" fill="#666"/>
<rect x="17" y="723" width="723" height="23" fill="#e2e2e2"/>
<use href="#gp" transform="translate(377 733) scale(.95 1)"/>
</g>

<!-- layers column -->
<rect x="1398" y="32" width="242" height="868" fill="#d5d5d5" stroke="#5e5e5e"/>
<rect x="1398.500" y="32.500" width="241" height="12.500" fill="url(#tb)"/>
<g transform="translate(1395 30) scale(.33333)" class="z">
<text x="700" y="33" style="font-size:22px;fill:#e0e0e0">◂◂</text>
<rect x="12" y="43" width="720" height="52" fill="url(#tr)"/>
<rect x="12" y="45" width="143" height="53" fill="#d5d5d5"/>
<text x="34" y="81" class="b">Layers</text>
<text x="175" y="81" class="b">Characte</text>
<rect x="308" y="45" width="2" height="50" fill="#666"/>
<text x="328" y="81" class="b">Paragrap</text>
<rect x="461" y="45" width="2" height="50" fill="#666"/>
<text x="480" y="81" class="b">OpenTyp</text>
<rect x="614" y="45" width="2" height="50" fill="#666"/>
<use href="#m" transform="translate(705 70)"/>
<rect x="28" y="115" width="688" height="1800" fill="#d5d5d5" stroke="#666" stroke-width="3"/>
<rect x="30" y="117" width="685" height="61" fill="#c6d5f1"/>
<path d="M30 178H716M30 240H716" stroke="#999" stroke-width="2.500"/>
<path d="M91 117V240M153 117V240M172 117V240M610 117V240" stroke="#a8a8a8" stroke-width="2"/>
<use href="#ey" transform="translate(57 145)"/><use href="#ey" transform="translate(57 208)"/>
<rect x="111" y="206" width="24" height="18" rx="2" fill="#555"/><path d="M115 206V200A7 7 0 0 1 131 200V206" fill="none" stroke="#555" stroke-width="4"/>
<rect x="158" y="119" width="12" height="55" fill="#6ee46c"/><rect x="158" y="182" width="12" height="55" fill="#6b80e4"/>
<path d="M189 136V158L206 147ZM189 199V221L206 210Z" fill="#111"/>
<rect x="238" y="122" width="52" height="51" fill="#fff" stroke="#111" stroke-width="3"/><rect x="246" y="132" width="12" height="8" fill="#e0d0b8"/><circle cx="281" cy="155" r="6" fill="#7a2030"/><rect x="278" y="158" width="6" height="8" fill="#555"/>
<rect x="238" y="184" width="52" height="52" fill="#fff" stroke="#111" stroke-width="3"/><path d="M258 202h3v3h-3zM266 198h3v3h-3zM262 208h3v3h-3zM258 222h2v2h-2zM268 222h2v2h-2z" fill="#444"/>
<text x="307" y="160">Layer 2</text><text x="307" y="222">Layer 1</text>
<circle cx="640" cy="146" r="12" fill="none" stroke="#333" stroke-width="2.500"/><circle cx="640" cy="208" r="12" fill="none" stroke="#333" stroke-width="2.500"/>
<path d="M697 117H715V135Z" fill="#333"/>
<!-- right dock -->
<rect x="738" y="5" width="117" height="865" fill="#d5d5d5" stroke="#5e5e5e" stroke-width="2.500"/>
<rect x="738" y="5" width="117" height="38" fill="url(#tb)"/>
<text x="814" y="33" style="font-size:22px;fill:#e0e0e0">▸▸</text>
<path d="M738 250H855M738 252H855M738 541H855M738 543H855M738 663H855M738 665H855" stroke="#777" stroke-width="2"/>
<use href="#gp" transform="translate(797 62)"/><use href="#gp" transform="translate(797 268)"/><use href="#gp" transform="translate(797 560)"/><use href="#gp" transform="translate(797 682)"/>
<rect x="755" y="80" width="83" height="70" rx="3" fill="#9a9a9a" stroke="#888" stroke-width="2"/>
<path d="M772 118C772 100 790 94 806 96C822 98 830 110 828 120C826 128 815 126 808 126C800 128 802 136 794 135C782 135 772 128 772 118Z" fill="#222"/><circle cx="785" cy="115" r="3.500" fill="#999"/><circle cx="795" cy="105" r="3.500" fill="#999"/><circle cx="810" cy="105" r="3.500" fill="#999"/><circle cx="818" cy="115" r="3.500" fill="#999"/>
<path d="M776 175V224H826C826 195 805 175 776 175Z" fill="#777" stroke="#222" stroke-width="2.500"/><path d="M776 224L806 190C820 200 826 212 826 224Z" fill="#ddd"/>
<rect x="775" y="308" width="46" height="32" fill="#555"/><path d="M775 324H821M790 308V340M806 308V340" stroke="#ddd" stroke-width="2"/><rect x="790" y="308" width="16" height="16" fill="#aaa"/>
<rect x="786" y="410" width="24" height="24" fill="#333"/><path d="M788 410L778 385M797 410V380M805 410L818 392" stroke="#333" stroke-width="4"/><circle cx="812" cy="394" r="6" fill="#444"/>
<circle cx="798" cy="482" r="11" fill="#333"/><circle cx="784" cy="496" r="10" fill="#333"/><circle cx="812" cy="496" r="10" fill="#333"/><path d="M790 514L798 490L806 514Z" fill="#333"/>
<circle cx="792" cy="608" r="20" fill="#666"/><circle cx="805" cy="620" r="19" fill="#ccc" fill-opacity=".6" stroke="#333" stroke-width="3"/>
<circle cx="800" cy="737" r="15" fill="#444"/><circle cx="800" cy="737" r="24" fill="none" stroke="#444" stroke-width="2.500" stroke-dasharray="6 4"/>
<path d="M790 800H824V838H806" fill="none" stroke="#333" stroke-width="2.500"/><rect x="776" y="820" width="20" height="20" fill="#e8e8e8" stroke="#222" stroke-width="2.500"/><rect x="786" y="832" width="14" height="12" fill="#d0d0d0" stroke="#222" stroke-width="2.500"/>
</g>
<g transform="translate(1395 660) scale(.33333)" class="z">
<text x="29" y="66">2 Layers</text>
<circle cx="326" cy="47" r="11" fill="none" stroke="#aaa" stroke-width="3"/><path d="M318 56L304 70" stroke="#bbb" stroke-width="4"/>
<rect x="383" y="41" width="20" height="20" fill="#555" stroke="#222" stroke-width="2.500"/><rect x="393" y="51" width="20" height="20" fill="#d5d5d5" fill-opacity=".5" stroke="#333" stroke-width="2.500"/>
<path d="M458 52H470V44M458 52L464 46M458 52L464 58" fill="none" stroke="#222" stroke-width="2.500"/><path d="M476 44H498V66H480L476 60Z" fill="#d5d5d5" stroke="#222" stroke-width="3"/>
<path d="M542 44H569V70H552L542 60Z" fill="#d5d5d5" stroke="#222" stroke-width="3"/><path d="M542 60H552V70" fill="none" stroke="#222" stroke-width="2"/>
<use href="#tr2" transform="translate(631 52) scale(1.300)" fill="#222"/>
<rect x="10" y="85" width="723" height="8" fill="#6e6e6e"/>
<rect x="10" y="92" width="723" height="52" fill="url(#tr)"/>
<rect x="10" y="92" width="197" height="55" fill="#d5d5d5"/>
<text x="34" y="128" class="b">Artboards</text>
<use href="#m" transform="translate(705 118)"/>
<rect x="28" y="163" width="688" height="474" fill="#d5d5d5" stroke="#666" stroke-width="3"/>
<rect x="30" y="165" width="685" height="55" fill="#c6d5f1"/>
<path d="M30 220H716" stroke="#999" stroke-width="2.500"/>
<path d="M121 165V220M595 165V220" stroke="#999" stroke-width="2"/>
<text x="48" y="205">1</text><text x="138" y="203">Artboard 2</text>
<rect x="622" y="184" width="28" height="22" fill="#dfe7f6" stroke="#333" stroke-width="2.500"/><path d="M612 184H618M612 206H618M654 184H660M654 206H660M622 174V180M650 174V180M622 210V216M650 210V216" stroke="#555" stroke-width="2"/>
<text x="29" y="678">1 Artboard</text>
<path d="M398 652L382 670H392V685H404V670H414Z" fill="#aaa"/><path d="M478 685L462 667H472V652H484V667H494Z" fill="#aaa"/>
<path d="M542 656H569V682H552L542 672Z" fill="#d5d5d5" stroke="#222" stroke-width="3"/><path d="M542 672H552V682" fill="none" stroke="#222" stroke-width="2"/>
<use href="#tr2" transform="translate(631 664) scale(1.300)" fill="#aaa"/>
<path d="M700 73h3v3h-3zM707 73h3v3h-3zM714 73h3v3h-3zM721 73h3v3h-3zM707 66h3v3h-3zM714 66h3v3h-3zM721 66h3v3h-3zM714 59h3v3h-3zM721 59h3v3h-3zM721 52h3v3h-3z" fill="#666"/>
<path d="M700 688h3v3h-3zM707 688h3v3h-3zM714 688h3v3h-3zM721 688h3v3h-3zM707 681h3v3h-3zM714 681h3v3h-3zM721 681h3v3h-3zM714 674h3v3h-3zM721 674h3v3h-3zM721 667h3v3h-3z" fill="#666"/>
<rect x="10" y="696" width="723" height="2.500" fill="#666"/>
<rect x="10" y="699" width="723" height="22" fill="#e2e2e2"/>
<use href="#gp" transform="translate(370 710) scale(.95 1)"/>
</g>

<!-- pathfinder -->
<g transform="translate(125 720) scale(.33333)" class="z">
<rect x="32" y="36" width="724" height="400" rx="10" fill="#888" opacity=".3"/>
<rect x="28" y="28" width="724" height="400" rx="8" fill="#d5d5d5" stroke="#666" stroke-width="3"/>
<path d="M28 68V36Q28 28 36 28H744Q752 28 752 36V68Z" fill="url(#tb)"/>
<text x="42" y="58" style="font-size:26px;fill:#e8e8e8">✕</text><text x="712" y="56" style="font-size:22px;fill:#e0e0e0">◂◂</text>
<rect x="29" y="68" width="722" height="52" fill="url(#tr)"/>
<rect x="232" y="68" width="2" height="52" fill="#666"/>
<rect x="355" y="68" width="200" height="54" fill="#d5d5d5"/>
<text x="52" y="105" class="b">Transform</text><text x="256" y="105" class="b">Align</text><text x="380" y="105" class="b">Pathfinder</text>
<use href="#m" transform="translate(717 95)"/>
<text x="45" y="168">Shape Modes:</text>
<rect x="64" y="209" width="24" height="24" fill="#999" stroke="#555" stroke-width="3"/><rect x="76" y="221" width="24" height="24" fill="#bbb" stroke="#555" stroke-width="3"/>
<rect x="172" y="209" width="24" height="24" fill="#d5d5d5" stroke="#555" stroke-width="3"/><rect x="184" y="221" width="24" height="24" fill="#d5d5d5" stroke="#777" stroke-width="2.500"/>
<rect x="280" y="209" width="24" height="24" fill="none" stroke="#999" stroke-width="3"/><rect x="292" y="221" width="24" height="24" fill="none" stroke="#999" stroke-width="3"/><rect x="292" y="221" width="12" height="12" fill="#555"/>
<rect x="388" y="209" width="24" height="24" fill="none" stroke="#333" stroke-width="3"/><rect x="400" y="221" width="24" height="24" fill="none" stroke="#333" stroke-width="3"/>
<rect x="480" y="198" width="252" height="57" fill="#e0e0e0" stroke="#aaa" stroke-width="2.500"/>
<text x="606" y="238" class="c g">Expand</text>
<text x="45" y="310">Pathfinders:</text>
<g fill="none" stroke="#333" stroke-width="3"><path d="M77 354H97V362H89V368H77ZM91 362H104V376H96V380H91ZM100 370H116V390H100Z"/></g>
<path d="M192 352H214V362H202V370H192ZM204 366H220V376H234V394H204Z" fill="#333"/>
<path d="M310 351H338V368H324V378H310Z" fill="#444"/><rect x="322" y="370" width="30" height="24" fill="#222"/>
<rect x="427" y="351" width="28" height="28" fill="#aaa"/><rect x="440" y="364" width="28" height="28" fill="#bbb"/><rect x="440" y="364" width="15" height="15" fill="#333"/>
<g fill="none" stroke="#222" stroke-width="3"><path d="M545 353H566V360M545 353V374H552"/><rect x="556" y="362" width="16" height="16"/><path d="M584 392H563V385M584 392V371H577"/></g>
<rect x="662" y="354" width="24" height="24" fill="#d5d5d5" stroke="#666" stroke-width="3"/><path d="M686 366H698V390H672V378" fill="none" stroke="#222" stroke-width="3"/>
</g>
</svg>
</body></html>
